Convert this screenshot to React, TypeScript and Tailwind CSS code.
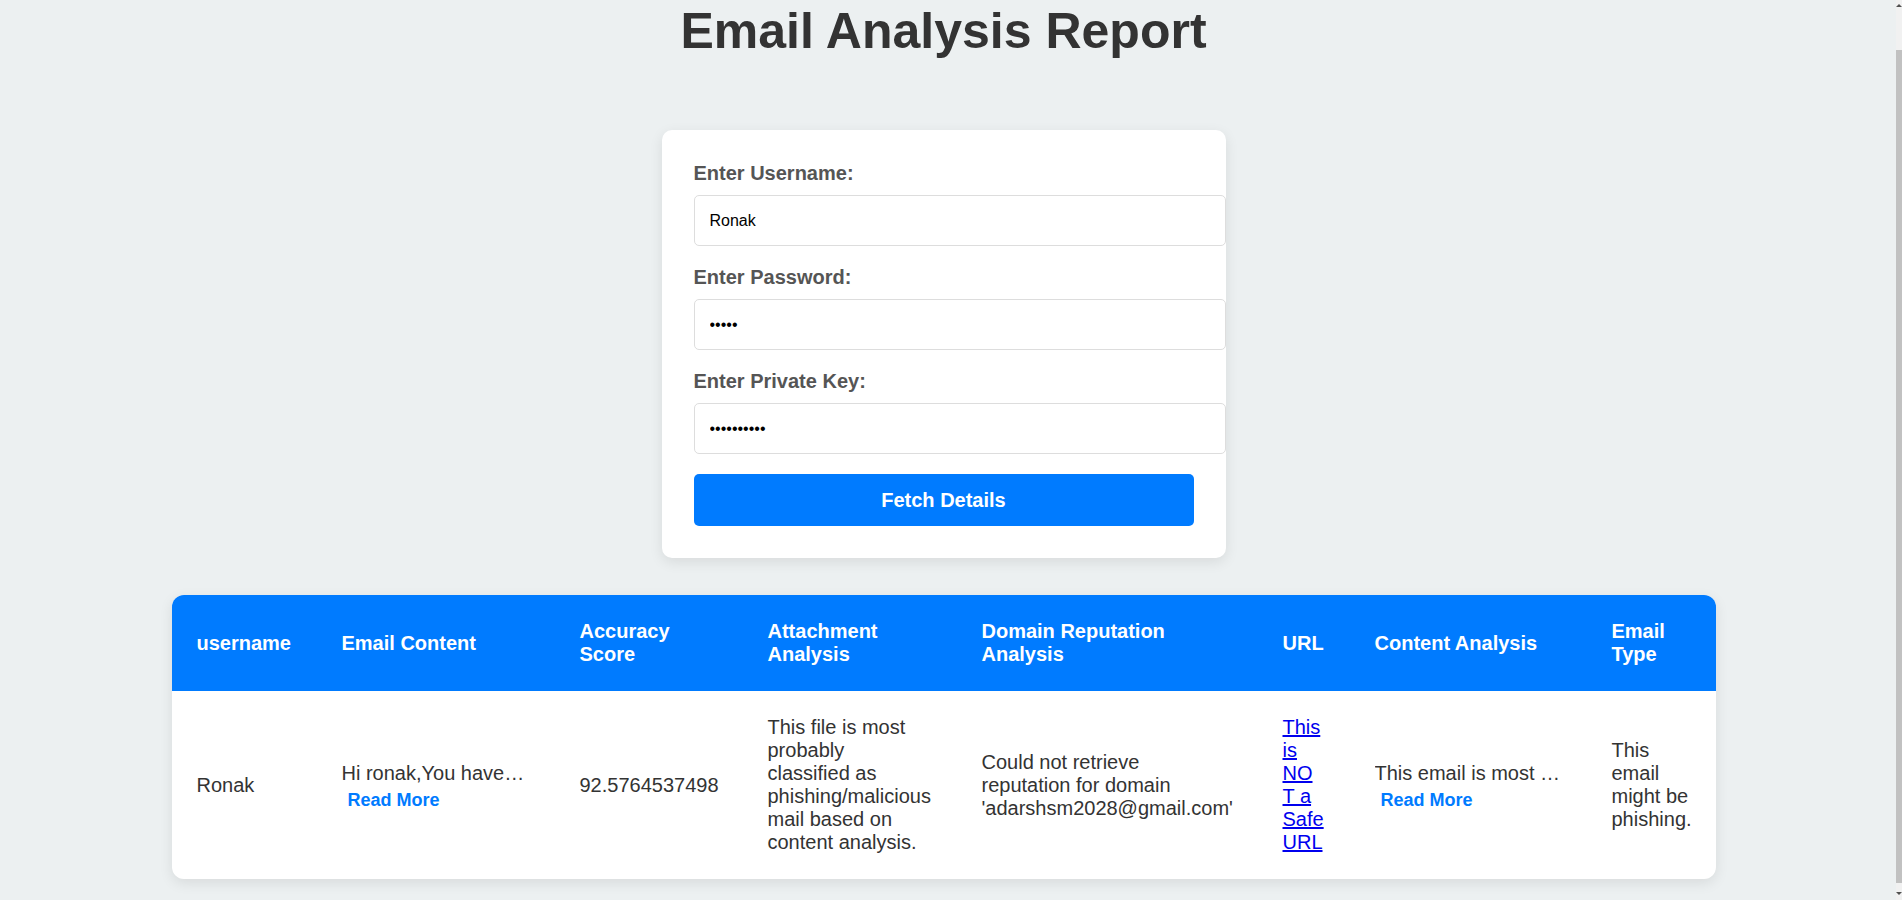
import { useEffect } from 'react';

type Row = {
  username: string;
  emailContent: string;
  accuracy: string;
  attachment: string;
  domain: string;
  url: string;
  contentAnalysis: string;
  emailType: string;
};

const rows: Row[] = [
  {
    username: 'Ronak',
    emailContent: 'Hi ronak,You have received a new message from your account team.',
    accuracy: '92.5764537498',
    attachment: 'This file is most probably classified as phishing/malicious mail based on content analysis.',
    domain: "Could not retrieve reputation for domain 'adarshsm2028@gmail.com'",
    url: 'This is NOT a Safe URL',
    contentAnalysis: 'This email is most likely a phishing attempt.',
    emailType: 'This email might be phishing.',
  },
];

const Field = ({ label, type, value }: { label: string; type: string; value: string }) => (
  <div className="mb-[20px]">
    <label className="block mb-[10px] text-[20px] leading-[23px] font-bold text-[#555]">{label}</label>
    <input
      type={type}
      defaultValue={value}
      readOnly
      className="box-content w-full h-[19px] p-[15px] border border-[#ddd] rounded-[5px] bg-white text-[16px] text-black outline-none"
    />
  </div>
);

const Truncated = ({ text }: { text: string }) => (
  <div className="pt-[8px]">
    <span className="block overflow-hidden whitespace-nowrap text-ellipsis">{text}</span>
    <button className="block px-[6px] py-[5px] text-[18px] leading-[21px] font-bold text-[#007bff] bg-transparent">
      Read More
    </button>
  </div>
);

// thin scrollbar as seen in the screenshot
const ScrollStrip = () => (
  <div className="fixed top-0 right-0 flex h-screen w-[6px] flex-col bg-[#f1f1f1]">
    <div className="flex h-[50px] items-start justify-center pt-[4px]">
      <div className="h-0 w-0 border-x-[3px] border-b-[3px] border-x-transparent border-b-[#505050]" />
    </div>
    <div className="flex-1 bg-[#c1c1c1]" />
    <div className="flex h-[17px] items-end justify-center pb-[5px]">
      <div className="h-0 w-0 border-x-[3px] border-t-[3px] border-x-transparent border-t-[#505050]" />
    </div>
  </div>
);

export default function App() {
  useEffect(() => {
    window.scrollTo(0, document.documentElement.scrollHeight);
  }, []);

  const th = 'p-[25px] text-left align-middle font-bold';
  const td = 'p-[25px] align-middle';

  return (
    <div className="min-h-screen bg-[#ecf0f1] pt-[39px] pb-[21px] pr-[15px] font-['Liberation_Sans',Arial,sans-serif] text-[#333]">
      <h1 className="text-center text-[50px] leading-[57px] font-bold text-[#333]">Email Analysis Report</h1>

      <div className="mx-auto mt-[70px] w-[564px] rounded-[10px] bg-white p-[32px] shadow-[0_4px_14px_rgba(0,0,0,0.09)]">
        <Field label="Enter Username:" type="text" value="Ronak" />
        <Field label="Enter Password:" type="password" value="Ronak" />
        <Field label="Enter Private Key:" type="password" value="ronak12345" />
        <button className="w-full h-[52px] rounded-[5px] bg-[#007bff] text-[20px] font-bold text-white">
          Fetch Details
        </button>
      </div>

      <div className="mx-auto mt-[37px] w-[1544px] overflow-hidden rounded-[12px] bg-white shadow-[0_4px_14px_rgba(0,0,0,0.09)]">
        <table className="w-full table-fixed border-collapse text-[20px] leading-[23px]">
          <thead>
            <tr className="bg-[#007bff] text-white">
              <th className={`${th} w-[145px]`}>username</th>
              <th className={`${th} w-[238px]`}>Email Content</th>
              <th className={`${th} w-[188px]`}>Accuracy Score</th>
              <th className={`${th} w-[214px]`}>Attachment Analysis</th>
              <th className={`${th} w-[301px]`}>Domain Reputation Analysis</th>
              <th className={`${th} w-[92px]`}>URL</th>
              <th className={`${th} w-[237px]`}>Content Analysis</th>
              <th className={th}>Email Type</th>
            </tr>
          </thead>
          <tbody>
            {rows.map((r, i) => (
              <tr key={i}>
                <td className={td}>{r.username}</td>
                <td className={td}>
                  <Truncated text={r.emailContent} />
                </td>
                <td className={td}>{r.accuracy}</td>
                <td className={td}>{r.attachment}</td>
                <td className={td}>{r.domain}</td>
                <td className={`${td} break-words`}>
                  <a href="#" className="text-[#0000ee] underline">{r.url}</a>
                </td>
                <td className={td}>
                  <Truncated text={r.contentAnalysis} />
                </td>
                <td className={td}>{r.emailType}</td>
              </tr>
            ))}
          </tbody>
        </table>
      </div>
      <ScrollStrip />
    </div>
  );
}
